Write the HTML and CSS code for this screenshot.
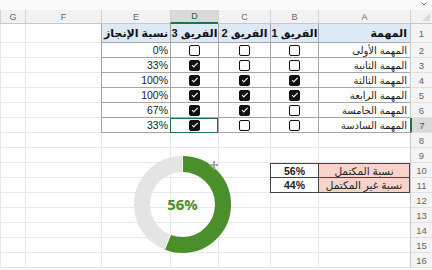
FILE: index.html
```html
<!DOCTYPE html>
<html lang="ar">
<head>
<meta charset="utf-8">
<link rel="stylesheet" href="styles.css">
</head>
<body>
<div class="topbar">
  <svg class="chev" width="6" height="4" viewBox="0 0 6 4"><path d="M0.5 0.5 L3 3 L5.5 0.5" fill="none" stroke="#777" stroke-width="1"/></svg>
</div>
<div class="sheet">
  <div class="corner"></div><div class="ch">A</div><div class="ch">B</div><div class="ch">C</div><div class="ch sel">D</div><div class="ch">E</div><div class="ch">F</div><div class="ch">G</div>

  <div class="rn r1">1</div><div class="td th right">المهمة</div><div class="td th">الفريق 1</div><div class="td th">الفريق 2</div><div class="td th">الفريق 3</div><div class="td th">نسبة الإنجاز</div><div class="c"></div><div class="c"></div>

  <div class="rn">2</div><div class="td right">المهمة الأولى</div><div class="td"><span class="cb"></span></div><div class="td"><span class="cb"></span></div><div class="td"><span class="cb"></span></div><div class="td num">0%</div><div class="c"></div><div class="c"></div>

  <div class="rn">3</div><div class="td right">المهمة الثانية</div><div class="td"><span class="cb"></span></div><div class="td"><span class="cb"></span></div><div class="td"><span class="cb on"></span></div><div class="td num">33%</div><div class="c"></div><div class="c"></div>

  <div class="rn">4</div><div class="td right">المهمة الثالثة</div><div class="td"><span class="cb on"></span></div><div class="td"><span class="cb on"></span></div><div class="td"><span class="cb on"></span></div><div class="td num">100%</div><div class="c"></div><div class="c"></div>

  <div class="rn">5</div><div class="td right">المهمة الرابعة</div><div class="td"><span class="cb on"></span></div><div class="td"><span class="cb on"></span></div><div class="td"><span class="cb on"></span></div><div class="td num">100%</div><div class="c"></div><div class="c"></div>

  <div class="rn">6</div><div class="td right">المهمة الخامسة</div><div class="td"><span class="cb"></span></div><div class="td"><span class="cb on"></span></div><div class="td"><span class="cb on"></span></div><div class="td num">67%</div><div class="c"></div><div class="c"></div>

  <div class="rn sel">7</div><div class="td right">المهمة السادسة</div><div class="td"><span class="cb"></span></div><div class="td"><span class="cb"></span></div><div class="td active"><span class="cb on"></span></div><div class="td num">33%</div><div class="c"></div><div class="c"></div>

  <div class="rn">8</div><div class="c"></div><div class="c"></div><div class="c"></div><div class="c"></div><div class="c"></div><div class="c"></div><div class="c"></div>
  <div class="rn">9</div><div class="c"></div><div class="c"></div><div class="c"></div><div class="c"></div><div class="c"></div><div class="c"></div><div class="c"></div>

  <div class="rn">10</div><div class="sm pink top">نسبة المكتمل</div><div class="sm val top">56%</div><div class="c"></div><div class="c"></div><div class="c"></div><div class="c"></div><div class="c"></div>
  <div class="rn">11</div><div class="sm pink">نسبة غير المكتمل</div><div class="sm val">44%</div><div class="c"></div><div class="c"></div><div class="c"></div><div class="c"></div><div class="c"></div>

  <div class="rn">12</div><div class="c"></div><div class="c"></div><div class="c"></div><div class="c"></div><div class="c"></div><div class="c"></div><div class="c"></div>
  <div class="rn">13</div><div class="c"></div><div class="c"></div><div class="c"></div><div class="c"></div><div class="c"></div><div class="c"></div><div class="c"></div>
  <div class="rn">14</div><div class="c"></div><div class="c"></div><div class="c"></div><div class="c"></div><div class="c"></div><div class="c"></div><div class="c"></div>
  <div class="rn">15</div><div class="c"></div><div class="c"></div><div class="c"></div><div class="c"></div><div class="c"></div><div class="c"></div><div class="c"></div>
  <div class="rn">16</div><div class="c"></div><div class="c"></div><div class="c"></div><div class="c"></div><div class="c"></div><div class="c"></div><div class="c"></div>
</div>

<div class="chart">
  <svg width="97" height="97" viewBox="0 0 97 97">
    <circle cx="48.5" cy="48.5" r="40.5" fill="none" stroke="#e4e4e4" stroke-width="16"/>
    <circle cx="48.5" cy="48.5" r="40.5" fill="none" stroke="#4b8f2a" stroke-width="16" stroke-dasharray="142.5 300" transform="rotate(-90 48.5 48.5)"/>
    <line x1="48.5" y1="0" x2="48.5" y2="17" stroke="#fff" stroke-width="1"/>
    <line x1="48.5" y1="48.5" x2="48.5" y2="97" stroke="#fff" stroke-width="1" transform="rotate(21.6 48.5 48.5)" stroke-dasharray="0 32 17"/>
  </svg>
  <div class="pct">56%</div>
</div>
<svg class="cursor" width="10" height="10" viewBox="0 0 10 10">
  <path d="M5 0.5 L6.5 2.5 H5.6 V4.4 H7.5 V3.5 L9.5 5 L7.5 6.5 V5.6 H5.6 V7.5 H6.5 L5 9.5 L3.5 7.5 H4.4 V5.6 H2.5 V6.5 L0.5 5 L2.5 3.5 V4.4 H4.4 V2.5 H3.5 Z" fill="#222" stroke="#fff" stroke-width="0.6"/>
</svg>
</body>
</html>
```

FILE: styles.css
```css
* { box-sizing: border-box; }
html, body { margin: 0; padding: 0; }
body {
  width: 432px;
  height: 270px;
  overflow: hidden;
  background: #fff;
  font-family: "Liberation Sans", "DejaVu Sans", sans-serif;
  font-size: 10px;
  color: #222;
  position: relative;
}
.topbar {
  height: 10px;
  background: #fbfbfb;
  position: relative;
}
.chev {
  position: absolute;
  right: 5px;
  top: 2px;
}
.sheet {
  direction: rtl;
  display: grid;
  grid-template-columns: 22px 92px 48px 52px 48px 69px 76px 25px;
  grid-template-rows: 14px 19px repeat(15, 15px);
}
.corner {
  background: #f2f2f2;
  border-left: 1px solid #d4d4d4;
  border-bottom: 1px solid #c8c8c8;
  position: relative;
}
.corner::after {
  content: "";
  position: absolute;
  right: 2px;
  bottom: 2px;
  width: 0; height: 0;
  border-left: 8px solid transparent;
  border-bottom: 8px solid #d9d9d9;
}
.ch {
  background: #f2f2f2;
  color: #666;
  font-size: 9px;
  display: flex;
  align-items: center;
  justify-content: center;
  border-left: 1px solid #d4d4d4;
  border-bottom: 1px solid #c8c8c8;
}
.ch.sel {
  background: #d9d9d9;
  color: #1e6b3c;
  border-bottom: 2px solid #217346;
}
.rn {
  background: #f4f4f4;
  color: #666;
  font-size: 9.5px;
  display: flex;
  align-items: center;
  justify-content: center;
  border-left: 1px solid #c8c8c8;
  border-bottom: 1px solid #e0e0e0;
}
.rn.sel {
  background: #d9d9d9;
  color: #1e6b3c;
  border-left: 2px solid #217346;
}
.c {
  border-left: 1px solid #e8e8e8;
  border-bottom: 1px solid #e8e8e8;
}
.td {
  border-left: 1px solid #a6a6a6;
  border-bottom: 1px solid #a6a6a6;
  display: flex;
  align-items: center;
  justify-content: center;
  font-size: 10px;
  white-space: nowrap;
  overflow: hidden;
}
.th {
  background: #dde9f6;
  font-weight: bold;
  font-size: 11px;
  color: #111;
}
.right { justify-content: flex-start; padding-right: 3px; }
.num { justify-content: flex-end; direction: ltr; padding-right: 2px; font-size: 10.5px; color: #222; }
.active {
  outline: 1.5px solid #217346;
  outline-offset: -1px;
}
.cb {
  width: 11px;
  height: 11px;
  border: 1.5px solid #111;
  border-radius: 2px;
  position: relative;
}
.cb.on {
  background: #111;
}
.cb.on::after {
  content: "";
  position: absolute;
  width: 4.5px;
  height: 2.2px;
  border-left: 1.3px solid #fff;
  border-bottom: 1.3px solid #fff;
  transform: rotate(-45deg);
  top: 2.2px;
  left: 1.5px;
}
.sm {
  border-left: 1px solid #444;
  border-bottom: 1px solid #444;
  display: flex;
  align-items: center;
  justify-content: center;
  font-size: 10.5px;
  white-space: nowrap;
}
.sm.top { border-top: 1px solid #444; }
.pink { background: #f6d4cc; border-right: 1px solid #444; }
.val { font-weight: bold; direction: ltr; }
.chart {
  position: absolute;
  left: 134px;
  top: 156px;
  width: 97px;
  height: 97px;
}
.chart svg { display: block; }
.pct {
  position: absolute;
  left: 0; right: 0;
  top: 38px;
  text-align: center;
  font-family: "Open Sans", "Liberation Sans", sans-serif;
  font-weight: bold;
  font-size: 15px;
  color: #4b8f2a;
}
.cursor {
  position: absolute;
  left: 209px;
  top: 160px;
}
```
